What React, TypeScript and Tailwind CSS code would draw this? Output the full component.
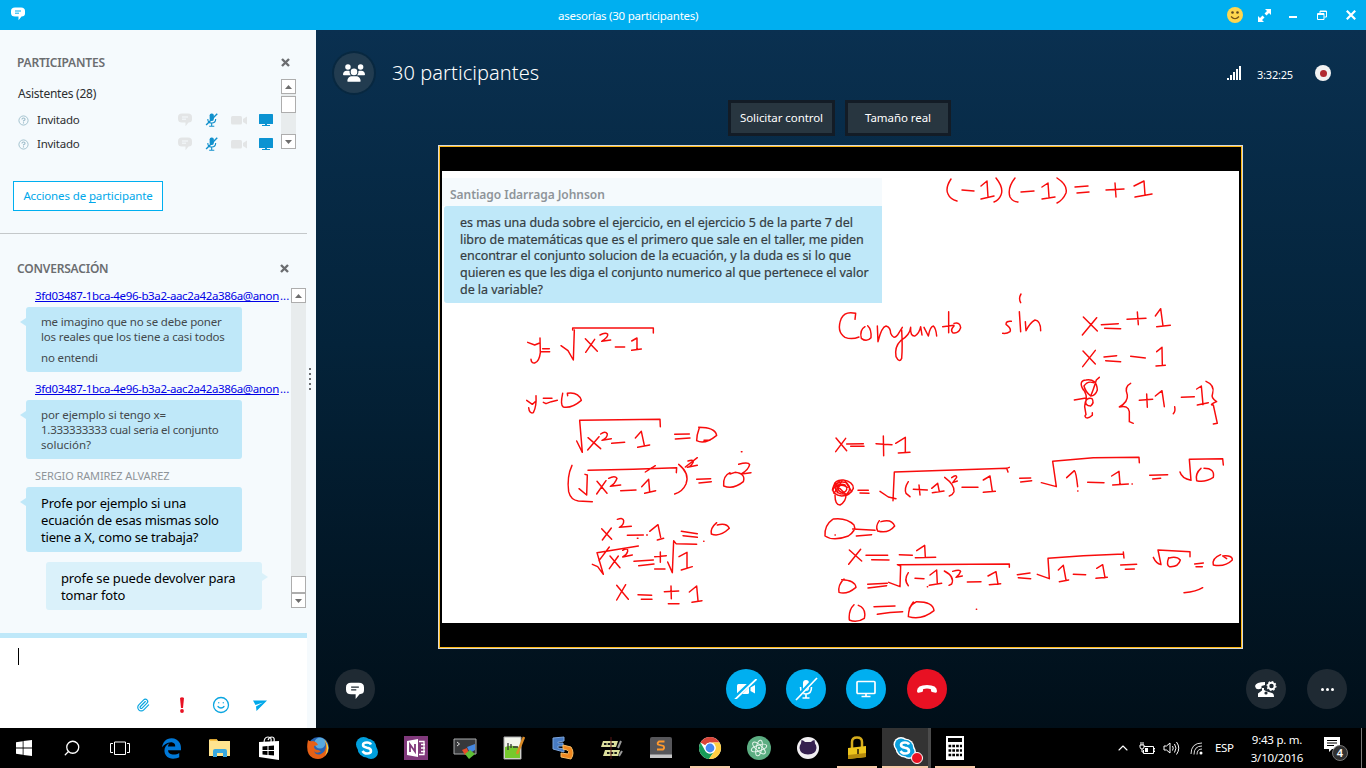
import React from "react";
import { FaUsers, FaGithubAlt, FaEdgeLegacy } from "react-icons/fa6";
import { Paperclip, Smile, ChevronUp, Search } from "lucide-react";

const INK_LEFT = [
  "M83 97L104 105L119 99M120 84L121 128Q118 155 104 159Q94 160 93 148M128 116H148M124 125H149",
  "M183 107L204 122L220 150L223 60M218 60V54H460V69M256 86L292 124M284 88L257 127",
  "M300 75Q315 66 323 72Q326 80 305 94L332 90M346 111H374M395 93L411 84V118M395 121L424 117",
  "M80 271L97 283L108 273M108 257Q110 290 100 308Q88 312 86 293M130 265H156M130 277L138 281L154 275L172 271",
  "M188 250Q180 285 190 291Q215 296 244 271Q235 245 202 250L203 257",
  "M230 393L247 427L239 331L480 328L481 350M264 383L302 416M297 380L263 420",
  "M302 372Q316 362 322 372Q322 384 306 391L334 386M335 400L374 397M406 384L424 364L433 406M413 412L449 405",
  "M524 373L568 372M526 387L570 384M598 353Q590 375 590 392Q615 405 650 376Q645 352 596 352M612 391H630",
  "M216 466Q200 500 206 545Q212 570 235 573L277 575M237 536L260 555L262 495L255 493M264 481L400 478L530 473L529 488M436 486L466 467",
  "M291 514L321 550M318 512L290 552M326 505Q345 495 351 505Q345 522 331 529L362 525M362 542L408 540",
  "M425 530L446 508L449 545M434 550L467 542M536 463Q570 490 558 522Q548 545 524 552",
  "M564 453Q580 448 580 455Q575 468 562 472L592 466M556 471L592 443M590 508L632 506M597 519L634 515",
  "M690 488Q668 498 671 528Q700 540 730 515Q738 490 705 487L690 492M716 463Q745 455 749 464Q745 480 724 492L753 488M724 425h2",
  "M305 656L335 688M334 654L307 690M352 628Q370 622 371 632Q372 645 358 652L394 649M382 676L430 675M412 685h2M440 675h2",
  "M449 664L474 644L482 682M472 690L491 685M544 664L592 671M549 677L592 682M650 638Q630 655 634 672Q660 682 688 655Q680 638 652 645M611 694h1",
  "M277 763L293 770L310 793L291 728L415 708M297 752L328 711M330 738L360 773M355 738L328 776M368 721Q385 712 383 724Q380 735 368 741L397 735",
  "M402 754L460 750M416 767L462 762M464 740L499 737M481 726V757M464 777H495M503 756L517 788L521 692L528 701L590 703",
  "M537 740L561 727V772M544 780L577 770M350 826L385 868M377 824L350 870M414 854L455 856M424 868H456",
  "M493 845L536 843M513 828L514 866M505 881H537M568 846L590 828L594 872M576 877L606 872",
];

const INK_TOP = [
  "M165 88L167 70Q135 62 124 85Q108 125 135 142Q155 150 177 141",
  "M195 110Q178 120 184 145Q200 158 213 143Q215 118 203 107M232 108L234 155Q245 110 258 108Q272 112 272 130Q280 150 292 136L307 112",
  "M305 120Q308 170 305 205Q298 220 288 200Q283 170 302 152Q330 135 332 112Q330 140 345 138Q358 130 362 110L366 135",
  "M372 112L385 138Q390 110 400 108Q408 115 410 138M446 65V128M428 110L462 106M462 108Q450 120 458 128Q475 132 482 113Q480 95 462 100",
  "M634 94Q618 92 618 103Q635 115 630 125Q620 132 608 130M658 65L662 125M663 12Q655 25 662 38M676 95L678 122Q690 98 705 90Q722 92 722 122",
  "M850 81L892 123M890 83L847 135M904 104L955 101M914 115L962 116M981 88L1038 85M1012 66L1015 104M1066 78L1082 56L1089 108M1070 110L1111 106",
  "M849 183L886 222M886 181L848 230M912 201L950 197M917 212L962 215M992 199L1036 204M1070 185L1086 172L1087 226M1068 228L1096 226",
  "M850 300Q834 272 858 270Q890 265 892 300Q886 318 872 318Q856 305 852 288Q862 272 880 278M898 262L889 270Q880 300 872 318M850 298Q862 315 858 330Q854 348 872 348Q884 338 876 326Q862 322 856 336L854 350L858 374Q852 378 858 383Q866 386 877 376V368M823 330L858 324",
  "M992 280Q972 290 982 315Q985 335 958 351Q985 345 988 365V395L1000 400M1018 331L1058 328M1040 312L1042 352M1066 318L1086 302L1093 350",
  "M1124 350Q1127 365 1120 371M1144 322L1183 320M1190 297L1204 288L1209 344M1192 345L1225 338M1218 274Q1245 285 1238 310Q1232 325 1250 335Q1225 345 1240 345L1252 400L1240 402",
];

const INK_BOTTOM = [
  "M108 24L140 62M137 25L107 65M140 42L190 41M152 49H192M228 41L276 44M250 18L251 77M287 40L316 22V66M295 69L330 67",
  "M100 170Q105 148 130 150Q160 155 160 175Q150 198 125 198Q98 195 98 175Q110 150 140 158Q158 178 140 192Q110 195 106 175Q115 158 135 165Q148 180 130 188Q112 185 115 170Q125 160 142 172",
  "M97 180L118 154M102 190L126 152M104 160L140 196M136 154L155 185M112 188L118 166M105 195Q105 225 120 225Q138 215 138 195",
  "M174 181H205M180 189L207 190M240 184L265 201L288 206M279 212L283 126L620 115L628 112M620 115L624 126",
  "M325 155Q312 175 318 190L330 200M340 178L382 180M357 165L360 195M395 175L413 160L418 185M397 188L432 183M434 142Q465 165 462 185Q458 195 448 198M455 143Q470 132 470 142L458 158L472 153",
  "M486 172H534M550 150L570 138L577 184M550 187L586 184M659 145L692 144M662 156L695 152M724 158L769 170L758 94L880 83L1017 82L1018 98",
  "M800 143L823 122Q828 125 833 170M833 183h1M863 157L912 158M935 138L957 124L960 162M938 165L985 162M996 162h1M1049 136L1103 134M1058 147L1082 145",
  "M1140 126Q1145 145 1173 151L1168 88L1268 86L1270 105M1203 115Q1185 130 1190 152Q1215 158 1240 142Q1245 115 1212 115",
  "M98 268Q73 285 75 318Q100 335 145 318Q170 300 162 285Q140 262 100 267M105 315h1M158 297L225 301M169 318L215 314M238 272Q225 290 233 303Q265 312 284 288Q275 265 243 275",
  "M148 360L185 393M182 358L146 403M198 376H263M215 389L267 390M298 374L337 376M350 362L374 346L376 382M346 383L407 382",
  "M132 447Q113 465 117 487Q140 495 168 472Q165 450 125 449M203 463L262 460M204 474L260 467M266 457L300 470L302 408L292 404L628 402V412",
  "M325 428Q310 450 325 467M345 445L372 446M390 435L410 420L412 462M388 466L425 460M382 470h1M433 423Q465 440 455 462L447 466M458 424Q480 417 482 424Q478 436 468 442L487 438",
  "M502 456L543 455M564 438L588 425L594 463M568 464L602 461M652 434L690 429M655 443L692 446M712 433L748 446L744 385L850 377L970 372M970 366L972 384",
  "M775 420L790 406L798 450M778 455L806 450M820 433L857 434M890 415L908 404L915 443M888 445L922 442M962 405L1010 403M976 418L1003 417",
  "M1060 382Q1068 400 1083 404L1074 360L1170 365V380M1106 383Q1098 405 1108 410Q1135 412 1141 390Q1130 378 1108 384M1184 402L1210 399M1188 410H1207M1262 374Q1235 385 1240 405Q1275 412 1297 390Q1298 375 1268 378L1280 386",
  "M1152 488Q1190 485 1208 473M162 524Q145 540 148 570Q170 580 193 565Q200 535 175 526M222 530L285 528M232 553Q270 545 308 545M340 516Q325 535 325 560Q365 572 402 542Q400 515 350 515Q335 522 328 535M529 538h1",
];

function Ink() {
  return (
    <svg
      viewBox="442 171 797 452"
      className="absolute inset-0 h-[452px] w-[797px]"
      fill="none"
      stroke="#f80c0c"
      strokeWidth="4.4"
      strokeLinecap="round"
      strokeLinejoin="round"
    >
      <g transform="translate(500 310) scale(.33333)">{INK_LEFT.map((d) => <path key={d} d={d} />)}</g>
      <g transform="translate(800 290) scale(.33333)">{INK_TOP.map((d) => <path key={d} d={d} />)}</g>
      <g transform="translate(800 430) scale(.33333)">{INK_BOTTOM.map((d) => <path key={d} d={d} />)}</g>
      <path d="M951 179Q945 188 948 194Q950 199 957 201M962 190L974 191M981 186L987 181L988 197M981 199L994 196M996 178Q1004 188 1001 195Q999 200 994 202M1015 178Q1007 188 1010 197Q1013 202 1018 202M1021 192L1034 191M1042 187L1048 183L1049 197M1042 199L1055 197M1057 178Q1068 185 1066 193Q1063 200 1057 203M1075 187L1088 186M1077 193L1089 192M1106 190L1124 189M1115 183L1116 197M1134 186L1144 181L1145 195M1135 197L1152 194" strokeWidth="1.450" />
    </svg>
  );
}

function ChatBubble({ className, line }: { className: string; line: string }) {
  return (
    <svg viewBox="0 0 14 14" className={className}>
      <path d="M4 .5h6Q14 .5 14 4v2.500Q14 9.500 10.500 9.500L7.500 13.200V9.500H4Q0 9.500 0 6V4Q0 .5 4 .5Z" fill="currentColor" />
      <path d="M4 4h6M4 6.200h4" stroke={line} strokeWidth="1" />
    </svg>
  );
}

function CloseX() {
  return (
    <svg viewBox="0 0 9 9" className="size-[9px]">
      <path d="M1 1L8 8M8 1L1 8" stroke="#6b6d70" strokeWidth="2.400" />
    </svg>
  );
}

function ScrollButton({ up }: { up?: boolean }) {
  return (
    <div className="flex size-[15px] shrink-0 items-center justify-center border border-[#adadad] bg-white">
      <svg viewBox="0 0 7 4" className="h-1 w-[7px]">
        <path d={up ? "M0 4L3.500 0L7 4Z" : "M0 0L3.500 4L7 0Z"} fill="#6d6d6d" />
      </svg>
    </div>
  );
}

function MicOff({ className }: { className: string }) {
  return (
    <svg viewBox="0 0 14 15" className={className} fill="none" stroke="currentColor">
      <rect x="5" y="0.500" width="4.500" height="8" rx="2" fill="currentColor" stroke="none" />
      <path d="M3 6.500Q3 10.800 7.200 10.800Q11.500 10.800 11.500 6.500M7.200 11v3M4.500 14.200h5.500" strokeWidth="1.200" />
      <path d="M1.200 13L13.200 0.800" strokeWidth="1.500" />
    </svg>
  );
}

function GuestRow() {
  return (
    <div className="flex h-6 items-center">
      <svg viewBox="0 0 12 12" className="mr-2 size-[11px]" fill="none" stroke="#9dbdcb">
        <circle cx="6" cy="6" r="5" strokeWidth="1" />
        <path d="M4.300 4.800Q4.300 3.200 6 3.200Q7.700 3.200 7.700 4.600Q7.700 5.600 6 6.300V7M6 8v1.200" strokeWidth="1.200" />
      </svg>
      <span className="w-[141px] text-[11.500px] tracking-[-0.25px] text-[#2c2e30]">Invitado</span>
      <ChatBubble className="mr-[13px] size-[14px] text-[#e3e5e6]" line="#f5fafd" />
      <MicOff className="mr-[13px] h-[14px] w-[13px] text-[#1190cc]" />
      <svg viewBox="0 0 16 9" className="mr-3 h-[9px] w-4" fill="#e3e5e6">
        <rect width="11" height="8.500" rx="1.500" />
        <path d="M12 3L16 .5V8.500L12 6Z" />
      </svg>
      <svg viewBox="0 0 14 12" className="h-3 w-[14px]" fill="#0b93d2">
        <rect width="14" height="10" rx="0.600" />
        <path d="M6 10h2v1h3v1H3V11h3Z" />
      </svg>
    </div>
  );
}

function TailLeft() {
  return (
    <svg viewBox="0 0 6 8" className="absolute -left-1.5 top-[11px] h-2 w-1.5">
      <path d="M6 0V8L0 4Z" fill="#bfe8f9" />
    </svg>
  );
}

function Sidebar() {
  return (
    <aside className="flex w-[316px] shrink-0 bg-[#f5fafd]">
      <div className="flex w-[307px] flex-col">
        <div className="mt-6 flex h-4 items-center justify-between pl-[17px] pr-[17px]">
          <h2 className="pt-0.5 text-[12px] font-semibold tracking-[-0.2px] text-[#6b6d70]">PARTICIPANTES</h2>
          <CloseX />
        </div>
        <div className="mt-[9px] flex h-[70px] pl-[18px]">
          <div className="w-[263px] pt-[3px]">
            <div className="flex h-[22px] items-center pt-px text-[12px] tracking-[-0.24px] text-[#2c2e30]">Asistentes (28)</div>
            <div className="mt-1"><GuestRow /></div>
            <GuestRow />
          </div>
          <div className="flex w-[15px] flex-col bg-[#e8eced]">
            <ScrollButton up />
            <div className="mt-0.5 h-[17px] border border-[#adadad] bg-white" />
            <div className="flex-1" />
            <ScrollButton />
          </div>
        </div>
        <button className="ml-[13px] mt-8 h-[30px] w-[150px] border border-[#00aff0] bg-white text-[11.500px] tracking-[-0.12px] text-[#00a8ea]">
          Acciones de <span className="underline underline-offset-2">p</span>articipante
        </button>
        <div className="mt-[22px] h-px bg-[#c4c8ca]" />
        <div className="mt-[26px] flex h-4 items-center justify-between pl-[17px] pr-[18px]">
          <h2 className="pt-0.5 text-[12px] font-semibold tracking-[-0.2px] text-[#6b6d70]">CONVERSACIÓN</h2>
          <CloseX />
        </div>
        <div className="mt-3 flex h-80">
          <div className="w-[291px]">
            <Handle />
            <div className="relative ml-[26px] mt-[3px] h-[65px] w-[216px] rounded-[3px] bg-[#bfe8f9] pl-[15px] pt-[7px] text-[11.500px] leading-[15px] tracking-[-0.16px] whitespace-nowrap text-[#43494c]">
              <TailLeft />
              <div>me imagino que no se debe poner</div>
              <div>los reales que los tiene a casi todos</div>
              <div className="mt-1.5">no entendi</div>
            </div>
            <div className="mt-[9px]"><Handle /></div>
            <div className="relative ml-[26px] mt-[3px] h-[59px] w-[216px] rounded-[3px] bg-[#bfe8f9] pl-[15px] pt-[7px] text-[11.500px] leading-[15px] whitespace-nowrap text-[#43494c]">
              <TailLeft />
              <div className="tracking-[-0.1px]">por ejemplo si tengo x=</div>
              <div className="tracking-[-0.26px]">1.333333333 cual seria el conjunto</div>
              <div>solución?</div>
            </div>
            <div className="mt-[9px] h-4 pl-[35px] text-[11px] leading-4 tracking-[-0.11px] text-[#8e9499]">SERGIO RAMIREZ ALVAREZ</div>
            <div className="relative ml-[26px] mt-[3px] h-[65px] w-[216px] rounded-[3px] bg-[#bfe8f9] pl-[15px] pt-2 text-[13px] leading-[17px] tracking-[-0.19px] whitespace-nowrap text-black">
              <TailLeft />
              <div>Profe por ejemplo si una</div>
              <div>ecuación de esas mismas solo</div>
              <div>tiene a X, como se trabaja?</div>
            </div>
            <div className="relative ml-[46px] mt-2.5 h-12 w-[216px] rounded-[3px] bg-[#daf1fa] pl-[15px] pt-2 text-[13px] leading-[17px] tracking-[-0.14px] whitespace-nowrap text-black">
              <svg viewBox="0 0 6 8" className="absolute -right-1.5 top-[11px] h-2 w-1.5">
                <path d="M0 0V8L6 4Z" fill="#daf1fa" />
              </svg>
              <div>profe se puede devolver para</div>
              <div>tomar foto</div>
            </div>
          </div>
          <div className="flex w-[15px] flex-col bg-[#e8eced]">
            <ScrollButton up />
            <div className="flex-1" />
            <div className="h-[17px] border border-[#adadad] bg-white" />
            <ScrollButton />
          </div>
        </div>
        <div className="mt-[25px] h-[5px] bg-[#bfe8f9]" />
        <div className="flex flex-1 flex-col bg-white">
          <div className="ml-[18px] mt-2.5 h-[17px] w-px bg-black" />
          <div className="mt-[31px] flex h-[18px] items-center pl-[136px] text-[#0aa5e0]">
            <Paperclip className="size-[14px]" strokeWidth={2} />
            <svg viewBox="0 0 6 16" className="ml-[29px] h-4 w-1.5" fill="#e81123">
              <path d="M1 1Q3-.5 5 1L4 11H2Z" />
              <circle cx="3" cy="14" r="1.900" />
            </svg>
            <Smile className="ml-[27px] size-[18px]" strokeWidth={1.700} />
            <svg viewBox="0 0 14 11" className="ml-[23px] h-[11px] w-[14px]" fill="#00a8ea">
              <path d="M0 .5H14L3.500 11L3 6.500L10 2.500L2.500 5Z" />
            </svg>
          </div>
        </div>
      </div>
      <div className="flex flex-col gap-[3px] pl-[2px] pt-[338px]">
        {[0, 1, 2, 3, 4].map((i) => <i key={i} className="size-0.5 bg-[#6b6d70]" />)}
      </div>
    </aside>
  );
}

function Handle() {
  return (
    <div className="flex h-4 whitespace-nowrap pl-[35px] text-[11.500px] leading-4 text-[#0000e6]">
      <span className="w-[245px] tracking-[-0.37px] underline">3fd03487-1bca-4e96-b3a2-aac2a42a386a@anon</span>...
    </div>
  );
}

const round = "flex size-10 shrink-0 items-center justify-center rounded-full";

function Meeting() {
  return (
    <main className="flex flex-1 flex-col bg-linear-to-b from-[#0a3050] via-[#04233a] via-45% to-[#010f19] text-white">
      <div className="flex h-[70px] items-start pl-[18px] pr-[35px] pt-[23px]">
        <div className={`${round} bg-[#223c50] ring-2 ring-[#082840]`}><FaUsers className="size-[22px]" /></div>
        <h1 className="ml-[18px] pt-1.5 text-[20px] leading-7 font-light tracking-[0.07px]">30 participantes</h1>
        <div className="flex-1" />
        <svg viewBox="0 0 14 14" className="mt-[13px] size-[14px]" fill="#fff">
          <path d="M0 12h2v2H0ZM3 9h2v5H3ZM6 6h2v8H6ZM9 3h2v11H9ZM12 0h2v14H12Z" />
        </svg>
        <span className="ml-4 mt-[13px] w-[36px] whitespace-nowrap text-[11px] leading-[18px] tracking-[-0.2px]">3:32:25</span>
        <div className="ml-[22px] mt-3 flex size-4 items-center justify-center rounded-full bg-[#f2f2f2]">
          <div className="size-[7px] rounded-full bg-[#b22a30]" />
        </div>
      </div>
      <div className="flex h-9 gap-2.5 pl-[412px] text-[11.500px] tracking-[-0.07px]">
        <button className="w-[107px] border-3 border-[#131c26] bg-[#283640]">Solicitar control</button>
        <button className="w-[106px] border-3 border-[#131c26] bg-[#283640]">Tamaño real</button>
      </div>
      <div className="ml-[122px] mt-[9px] h-[504px] w-[805px] border border-[#d9d9d9]">
        <div className="h-full border border-[#fdb813] bg-black px-0.5 pt-6">
          <div className="relative h-[452px] w-[797px] bg-white pt-[7px] text-black">
            <div className="h-7 w-[440px] bg-[#f5fafd] pl-2 text-[12px] leading-[33px] font-semibold tracking-[-0.04px] text-[#8e9499]">Santiago Idarraga Johnson</div>
            <div className="ml-0.5 h-[97px] w-[438px] rounded-l-[3px] bg-[#bfe8f9] pl-4 pt-[9px] text-[12.500px] leading-[16.700px] tracking-[-0.045px] whitespace-nowrap text-[#353d42] [-webkit-text-stroke:0.2px]">
              <div>es mas una duda sobre el ejercicio, en el ejercicio 5 de la parte 7 del</div>
              <div>libro de matemáticas que es el primero que sale en el taller, me piden</div>
              <div>encontrar el conjunto solucion de la ecuación, y la duda es si lo que</div>
              <div>quieren es que les diga el conjunto numerico al que pertenece el valor</div>
              <div>de la variable?</div>
            </div>
            <Ink />
          </div>
        </div>
      </div>
      <div className="mt-5 flex items-center pl-[19px]">
        <div className={`${round} bg-[#1f2a33]`}><ChatBubble className="mt-1 size-[18px]" line="#1f2a33" /></div>
        <div className={`${round} ml-[351px] bg-[#00aff0]`}>
          <svg viewBox="0 0 24 20" className="h-5 w-6" fill="#fff">
            <rect x="3" y="5" width="12" height="10" rx="1.500" />
            <path d="M16.500 8.500L21 6V14.500L16.500 12Z" />
            <path d="M2 18L20 1" stroke="#00aff0" strokeWidth="4" /><path d="M0 21.500L22.500 0" stroke="#fff" strokeWidth="1.800" />
          </svg>
        </div>
        <div className={`${round} ml-5 bg-[#00aff0]`}>
          <svg viewBox="0 0 26 26" className="size-[26px]" fill="none" stroke="#fff">
            <rect x="10" y="4" width="6" height="11" rx="3" fill="#fff" stroke="none" />
            <path d="M7.500 11Q7.500 18 13 18T18.500 11M13 18V22M9.500 22h7" strokeWidth="1.600" />
            <path d="M3.500 22L22 2.500" stroke="#00aff0" strokeWidth="3.500" />
            <path d="M3 24L24 2" strokeWidth="1.700" />
          </svg>
        </div>
        <div className={`${round} ml-5 bg-[#00aff0]`}>
          <svg viewBox="0 0 20 18" className="h-[18px] w-5" fill="none" stroke="#fff" strokeWidth="1.700">
            <rect x="1" y="1.500" width="18" height="12" rx="1" /><path d="M10 13.500V16.500M5.500 16.500h9" />
          </svg>
        </div>
        <div className={`${round} ml-[21px] bg-[#e81123]`}>
          <svg viewBox="0 0 20 8" className="h-2 w-5" fill="#fff">
            <path d="M0 6Q0 0 10 0T20 6Q20 8 18.500 7.700L15 7Q14 6.800 14 5.500V4.200Q10 3 6 4.200V5.500Q6 6.800 5 7L1.500 7.700Q0 8 0 6Z" />
          </svg>
        </div>
        <div className={`${round} ml-[299px] bg-[#1f2a33]`}>
          <svg viewBox="0 0 22 17" className="h-[17px] w-[22px]" fill="#fff">
            <path d="M0 5Q1 1 10 1V4L6.500 5V7.500Q3 9 1 7.500ZM3 16V12.500L7 9.500V7H9V9L12 10.500L17 12Q19 12.500 19 16Z" />
            <circle cx="16.500" cy="5" r="3.200" fill="none" stroke="#fff" strokeWidth="2" />
            <circle cx="16.500" cy="5" r="4.400" fill="none" stroke="#fff" strokeWidth="1.200" strokeDasharray="1.700 1.700" />
            <circle cx="11" cy="12" r="1.600" fill="#1f2a33" />
          </svg>
        </div>
        <div className={`${round} ml-[21px] gap-0.5 bg-[#1f2a33]`}>
          {[0, 1, 2].map((i) => <i key={i} className="size-[3px] rounded-full bg-white" />)}
        </div>
      </div>
    </main>
  );
}

const S = ({ children, vb = "0 0 24 24" }: { children: React.ReactNode; vb?: string }) => (
  <svg viewBox={vb} className="size-6" fill="none">{children}</svg>
);

const apps: { icon: React.ReactNode; open?: boolean; active?: boolean }[] = [
  { icon: <FaEdgeLegacy className="size-[21px] text-[#0078d7]" /> },
  { icon: <S><path d="M1 3.500H9L10 5H22V20H1Z" fill="#ffe48f" /><path d="M2 4h7" stroke="#f4b52c" strokeWidth="1.500" /><path d="M5 21V15Q5 13 7 13H17Q19 13 19 15V21H15V17H9V21Z" fill="#39a9e0" /></S> },
  { icon: <S><path d="M2 6L22 5V24L2 21Z" fill="#fff" /><path d="M7 7Q7 1 11 1T14 6M11 4Q12 1 15 1T17 6" stroke="#fff" strokeWidth="1.200" /><path d="M5.500 10.500L10.500 10V14H5.500ZM11.500 10L17 9.500V14H11.500ZM5.500 15H10.500V19L5.500 18.500ZM11.500 15H17V19.500L11.500 19Z" fill="#000" /></S> },
  { icon: <S><circle cx="12.500" cy="11.500" r="10.500" fill="#2763b4" /><circle cx="14" cy="7" r="5.500" fill="#58a9dd" /><path d="M2 4Q4 6 7 5Q11 6 12 9L8 10Q8 14 12 14Q16 15 14 16Q10 18 8 15Q10 20 15 18Q22 14 19 5Q25 12 20 19Q15 25 7 22Q-1 18 2 4Z" fill="#e66016" /><path d="M18 3Q26 12 19 20Q23 11 18 3Z" fill="#ffd83b" /></S> },
  { icon: <S><circle cx="8.500" cy="8.500" r="7.500" fill="#009fdd" /><circle cx="16" cy="16" r="7" fill="#009fdd" /><circle cx="12" cy="12" r="9.500" fill="#009fdd" /><path d="M16 8.500Q15 6.500 12 6.500Q8 6.500 8 9Q8 11 12 11.700Q16 12.300 16 15Q16 17.500 12 17.500Q9 17.500 7.500 15" stroke="#fff" strokeWidth="2.500" /></S> },
  { icon: <S><path d="M0 0H24V24H0Z" fill="#80397b" /><path d="M3 5L14 3V21L3 19Z" fill="#fff" /><path d="M15 5.500H20V18.500H15M17 8.500h4M17 12h4M17 15.500h4" stroke="#fff" strokeWidth="1.300" /><path d="M6 16V8.500L11 15.500V8" stroke="#80397b" strokeWidth="1.800" /></S> },
  { icon: <S><path d="M1 3H23V18H1Z" fill="#37383a" stroke="#a9abad" /><path d="M4 6L6.500 8L4 10" stroke="#ddd" /><path d="M9 14L14 12L16 18L12 19Z" fill="#e64d29" /><path d="M14 11L22 8V14L17 17Z" fill="#4487e0" /><path d="M12 18L17 14L22 18L16 23Z" fill="#5fbf37" /></S> },
  { icon: <S><path d="M2 1H19V23H2Z" fill="#f3f5ec" stroke="#aaa" /><path d="M3 11Q11 8 18 12V22H3Z" fill="#75c92c" /><path d="M6 7V14M9 8V12M11 11H16" stroke="#333" strokeWidth="1.300" /><path d="M22 1L15 18" stroke="#dc8b25" strokeWidth="2.500" /></S> },
  { icon: <S><path d="M2 2L13 1V5L7 6V7L12 7V10L7 10V12L13 13V16L2 13Z" fill="#477ac1" stroke="#7ba4dc" /><path d="M12 9L20 11Q24 17 20 23L10 21V17L17 18Q19 15 16 14L12 13Z" fill="#ef8720" stroke="#f7bd65" /></S> },
  { icon: <S><path d="M3 5H18L16 11H1ZM5 14H20L18 20H3Z" fill="#dcdf9d" /><path d="M4 8H15M7 17H17" stroke="#151716" strokeWidth="1.800" strokeDasharray="2.500 1.200" /><path d="M11 1V23" stroke="#5b1616" /><path d="M21 5L18 12M22 15L19 20" stroke="#999" strokeWidth="2" /></S> },
  { icon: <S><rect x="1" y="1" width="22" height="20" rx="2" fill="#56565a" /><path d="M1 18.500H23V22H1Z" fill="#c5c5c6" /><path d="M15.500 5.500H10Q8 7 9 8.500L14.500 10Q16 12 14 13.500H8" stroke="#ff992d" strokeWidth="1.800" /></S> },
  { open: true, icon: <S><circle cx="12" cy="12" r="11" fill="#fff" /><path d="M12 12L2.500 6.500A11 11 0 0 1 21.500 6.500H12A5.500 5.500 0 0 0 7.300 9.200Z" fill="#da4438" /><path d="M2.500 6.500A11 11 0 0 0 11 23L16.500 15A5.500 5.500 0 0 1 7.200 14.700Z" fill="#179c58" /><path d="M21.500 6.500A11 11 0 0 1 11 23L16.800 14.700A5.500 5.500 0 0 0 14 6.500Z" fill="#ffcf42" /><circle cx="12" cy="12" r="5.500" fill="#fff" /><circle cx="12" cy="12" r="4.400" fill="#4587f4" /></S> },
  { icon: <S><circle cx="12" cy="12" r="12" fill="#5cad82" /><g stroke="#e6f4ec"><ellipse cx="12" cy="12" rx="2.800" ry="8" transform="rotate(12 12 12)" /><ellipse cx="12" cy="12" rx="2.800" ry="8" transform="rotate(72 12 12)" /><ellipse cx="12" cy="12" rx="2.800" ry="8" transform="rotate(132 12 12)" /></g><circle cx="12" cy="12" r="1" fill="#fff" /></S> },
  { icon: <S><circle cx="12" cy="12" r="11" fill="#f1eff2" /><path d="M3.500 12Q3.500 9 5 7.500L5.500 4Q8 4.500 9 6H15Q16 4.500 18.500 4L19 7.500Q20.500 9 20.500 12Q20 18 12 18.500Q4 18 3.500 12Z" fill="#35204f" /></S> },
  { open: true, icon: <S><path d="M7 12V6Q7 1.500 12 1.500T17 6V12" stroke="#d5ac1d" strokeWidth="2.500" /><path d="M3 12L21 10V21L3 23Z" fill="#edc51d" /><path d="M3 19L21 17V21L3 23Z" fill="#b58a0c" /><path d="M13 13V18" stroke="#52400d" strokeWidth="2" /></S> },
  { open: true, active: true, icon: (
    <div className="relative">
      <S><g fill="#fff"><circle cx="8" cy="8.500" r="7.500" /><circle cx="16" cy="16" r="7" /><circle cx="12" cy="12" r="9.500" /></g><g fill="#0a9fdc"><circle cx="8" cy="8.500" r="6" /><circle cx="16" cy="16" r="5.500" /><circle cx="12" cy="12" r="8.200" /></g><path d="M16 8.500Q15 6.500 12 6.500Q8 6.500 8 9Q8 11 12 11.700Q16 12.300 16 15Q16 17.500 12 17.500Q9 17.500 7.500 15" stroke="#fff" strokeWidth="2.600" /></S>
      <i className="absolute -right-1.5 -bottom-1 size-3 rounded-full border border-white bg-[#e81123]" />
    </div>
  ) },
  { open: true, icon: <S><path d="M3 0H21V24H3Z" fill="#fff" /><path d="M5 2H19V6H5Z" fill="#000" /><path d="M5.500 10H19M5.500 14.500H19M5.500 19H19" stroke="#000" strokeWidth="2.400" strokeDasharray="2.700 1.100" /></S> },
];

function Taskbar() {
  return (
    <footer className="flex h-10 shrink-0 bg-black text-white">
      <div className="flex w-12 items-center justify-center">
        <svg viewBox="0 0 16 16" className="size-4" fill="#fff"><path d="M0 2.200L6.700 1.200V7.600H0ZM7.500 1.100L16 0V7.600H7.500ZM0 8.400H6.700V14.800L0 13.800ZM7.500 8.400H16V16L7.500 14.900Z" /></svg>
      </div>
      <div className="flex w-12 items-center justify-center"><Search className="size-[18px] -scale-x-100" strokeWidth={1.700} /></div>
      <div className="mr-[3px] flex w-12 items-center justify-center">
        <svg viewBox="0 0 20 16" className="h-4 w-5" fill="none" stroke="#fff"><path d="M4.500 2H15.500V14.500H4.500ZM3 3.500H.5V12.500H3M17 3.500H19.500V12.500H17" /></svg>
      </div>
      {apps.map((a, i) => (
        <div key={i} className={a.active ? "flex w-[49px] flex-col items-center border-r-3 border-[#4b4b4b] bg-[#333]" : "flex w-[49px] flex-col items-center"}>
          <div className="flex h-[38px] items-center justify-center pr-px pt-0.5">{a.icon}</div>
          {a.open && <div className={a.active ? "h-0.5 w-full bg-[#f6caa8]" : "mr-px h-0.5 w-10 bg-[#f6caa8]"} />}
        </div>
      ))}
      <div className="flex flex-1 items-center pl-[135px]">
        <ChevronUp className="size-4" strokeWidth={1.700} />
        <svg viewBox="0 0 16 13" className="ml-2 h-[13px] w-4" fill="none" stroke="#fff"><path d="M5 4.500H14.500V11.500H4.500V8M14.500 6.500H16V9.500H14.500M1 3H5V5Q5 7 3 7T1 5ZM2 3V0M4 3V0M3 7V10H5" /><path d="M6 6h3v4H6Z" fill="#fff" stroke="none" /></svg>
        <svg viewBox="0 0 17 14" className="ml-2 h-[14px] w-[17px]" fill="none" stroke="#fff"><path d="M1 5H3.500L7 2V12L3.500 9H1ZM9.500 5Q11 7 9.500 9.500M11.500 3Q14.500 7 11.500 11.500M13.500 1Q18 7 13.500 13.500" /></svg>
        <svg viewBox="0 0 13 13" className="ml-2.5 size-[13px]" fill="none" stroke="#ddd"><path d="M1 12Q1 1 12 1M4 12.500Q4 4 12 4M7 12.500Q7 7 12 7" /><circle cx="11" cy="11" r="1.500" fill="#fff" stroke="none" /></svg>
        <span className="ml-[12px] w-[20px] text-[11.500px] tracking-[-0.4px]">ESP</span>
        <div className="ml-[15px] w-[54px] pt-px text-center text-[11.500px] leading-[18px] tracking-[-0.24px] whitespace-nowrap"><div>9:43 p. m.</div><div>3/10/2016</div></div>
        <div className="relative ml-[20px] size-[22px]">
          <svg viewBox="0 0 16 15" className="h-[15px] w-4"><path d="M0 0H16V12H8L5 15V12H0Z" fill="#fff" /><path d="M3 3.500H13M3 6H13M3 8.500H10" stroke="#000" /></svg>
          <span className="absolute left-2 top-2 flex size-4 items-center justify-center rounded-full border border-[#777] bg-[#303030] text-[11px] font-semibold">4</span>
        </div>
      </div>
      <div className="mr-1 w-px bg-[#777]" />
    </footer>
  );
}

export default function App() {
  return (
    <div className="flex h-[768px] w-[1366px] flex-col overflow-hidden bg-black font-['Noto_Sans','Open_Sans',sans-serif]">
      <header className="flex h-[30px] shrink-0 items-center bg-[#00aff0] pl-[11px] pr-[10px] text-white">
        <ChatBubble className="mt-[-2px] size-[14px]" line="#00aff0" />
        <div className="ml-[533px] flex-1 pt-0.5 text-[11.500px] tracking-[-0.25px] whitespace-nowrap">asesorías (30 participantes)</div>
        <svg viewBox="0 0 16 16" className="mr-[15px] size-4"><circle cx="8" cy="8" r="8" fill="#fed64e" /><path d="M4 9.500Q8 14 12 9.500" fill="none" stroke="#725016" strokeWidth="1.200" /><circle cx="5.500" cy="5.500" r="1.300" fill="#5d4820" /><circle cx="10.500" cy="5.500" r="1.300" fill="#5d4820" /></svg>
        <svg viewBox="0 0 13 13" className="mr-[18px] size-[13px]" fill="#fff"><path d="M7 0H13V6L11 4L8.500 6.500L6.500 4.500L9 2ZM0 7L2 9L4.500 6.500L6.500 8.500L4 11L6 13H0Z" /></svg>
        <div className="mr-5 mt-1 h-0.5 w-2 bg-white" />
        <svg viewBox="0 0 10 10" className="mr-[19px] size-[10px]" fill="none" stroke="#fff"><path d="M3 3.500V1H9.500V7H7.500M3 1.500H9.500M.5 3.500H7V9.500H.5ZM.5 4.500H7" /></svg>
        <svg viewBox="0 0 10 10" className="size-[10px]"><path d="M.8.8L9.200 9.200M9.200.8L.8 9.200" stroke="#fff" strokeWidth="2.200" /></svg>
      </header>
      <div className="flex h-[698px]">
        <Sidebar />
        <Meeting />
      </div>
      <Taskbar />
    </div>
  );
}
